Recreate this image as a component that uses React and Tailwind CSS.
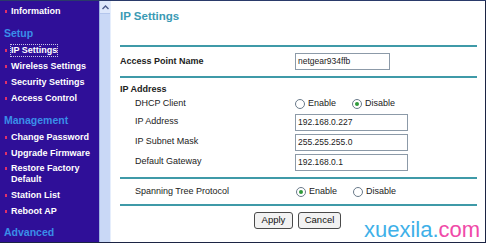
import React from "react";

const font = { fontFamily: '"Liberation Sans", Arial, sans-serif' };

function NavItem({ label, focused }) {
  return (
    <div className="flex items-center pl-[5px] h-[16px]">
      <span className="w-[2px] h-[3px] bg-[#e0306a] shrink-0" />
      <span
        className={`ml-[4px] text-[9px] leading-[11px] font-bold text-white ${
          focused ? "outline outline-1 outline-dotted outline-[#c8c8e8]" : ""
        }`}
      >
        {label}
      </span>
    </div>
  );
}

function NavHeading({ label }) {
  return (
    <div className="pl-[4px] h-[16px] flex items-center text-[10.5px] font-bold text-[#3a8ee8]">
      {label}
    </div>
  );
}

function Radio({ checked, label }) {
  return (
    <span className="flex items-center gap-[3px]">
      <span className="w-[10px] h-[10px] rounded-full border border-[#6a7a8a] bg-white flex items-center justify-center">
        {checked && <span className="w-[4px] h-[4px] rounded-full bg-[#2f9a3a]" />}
      </span>
      <span className="text-[9px] text-[#222]">{label}</span>
    </span>
  );
}

function TextBox({ value, w = "w-[113px]" }) {
  return (
    <div
      className={`${w} h-[17px] border border-[#8c9aa8] bg-white px-[2px] text-[8.5px] leading-[15px] text-[#222]`}
    >
      {value}
    </div>
  );
}

function FieldRow({ label, h = "h-[20px]", children }) {
  return (
    <div className={`flex items-center ${h}`}>
      <div className="pl-[15px] w-[175px] text-[9px] text-[#222]">{label}</div>
      {children}
    </div>
  );
}

const Line = () => <div className="h-[2px] bg-[#3f9aa8] mr-[8px]" />;

export default function App() {
  return (
    <div
      className="relative w-[486px] h-[246px] bg-white overflow-hidden border-t border-[#2a3a6a]"
      style={font}
    >
      <div className="flex h-[242px] border-b border-[#1c2444]">
        {/* Sidebar */}
        <div className="w-[99px] bg-[#2f0f98] pt-[2px] shrink-0">
          <NavItem label="Information" />
          <div className="h-[7px]" />
          <NavHeading label="Setup" />
          <NavItem label="IP Settings" focused />
          <NavItem label="Wireless Settings" />
          <NavItem label="Security Settings" />
          <NavItem label="Access Control" />
          <div className="h-[7px]" />
          <NavHeading label="Management" />
          <NavItem label="Change Password" />
          <NavItem label="Upgrade Firmware" />
          <div className="flex items-start pl-[5px] h-[26px] pt-[2px]">
            <span className="mt-[4px] w-[2px] h-[3px] bg-[#e0306a] shrink-0" />
            <span className="ml-[4px] text-[9px] leading-[11px] font-bold text-white">
              Restore Factory
              <br />
              Default
            </span>
          </div>
          <NavItem label="Station List" />
          <NavItem label="Reboot AP" />
          <div className="h-[6px]" />
          <NavHeading label="Advanced" />
        </div>

        {/* Scrollbar */}
        <div className="w-[12px] shrink-0 bg-[#c9d8f6] border-l border-[#9fb4e0] border-r border-r-[#e6eefc] flex flex-col">
          <div className="h-[13px] bg-[#dde7fb] border-b border-[#b4c6ec] flex items-center justify-center">
            <svg width="7" height="5" viewBox="0 0 7 5">
              <path d="M0.5 4 L3.5 1 L6.5 4" fill="none" stroke="#4a5a8a" strokeWidth="1.4" />
            </svg>
          </div>
        </div>

        {/* Content */}
        <div className="flex-1 pl-[9px] border-r border-[#1c2444]">
          <div className="h-[44px] pt-[7px] text-[11.5px] font-bold text-[#3a9ab4]">IP Settings</div>
          <Line />
          <div className="h-[29px] flex items-center">
            <div className="w-[175px] text-[9px] font-bold text-[#222]">Access Point Name</div>
            <TextBox value="netgear934ffb" w="w-[95px]" />
          </div>
          <Line />
          <div className="pt-[5px]">
            <div className="h-[13px] flex items-center text-[9px] font-bold text-[#222]">IP Address</div>
            <FieldRow label="DHCP Client" h="h-[16px]">
              <div className="flex gap-[16px]">
                <Radio label="Enable" />
                <Radio label="Disable" checked />
              </div>
            </FieldRow>
            <FieldRow label="IP Address">
              <TextBox value="192.168.0.227" />
            </FieldRow>
            <FieldRow label="IP Subnet Mask">
              <TextBox value="255.255.255.0" />
            </FieldRow>
            <FieldRow label="Default Gateway">
              <TextBox value="192.168.0.1" />
            </FieldRow>
          </div>
          <div className="h-[5px]" />
          <Line />
          <FieldRow label="Spanning Tree Protocol" h="h-[25px]">
            <div className="flex gap-[16px] pl-[1px]">
              <Radio label="Enable" checked />
              <Radio label="Disable" />
            </div>
          </FieldRow>
          <Line />
          <div className="flex gap-[5px] pt-[6px] pl-[134px]">
            <button className="w-[39px] h-[17px] rounded-[3px] border border-[#4a4a4a] bg-[#f2f2f2] text-[9.5px] text-[#111]">
              Apply
            </button>
            <button className="w-[43px] h-[17px] rounded-[3px] border border-[#4a4a4a] bg-[#f2f2f2] text-[9.5px] text-[#111]">
              Cancel
            </button>
          </div>
        </div>
      </div>

      {/* Watermark */}
      <div className="absolute left-[364px] top-[216px] text-[22px] leading-[26px]">
        <span className="text-[#3eb0e8]">xuexila.</span>
        <span className="text-[#f04aa8]">com</span>
      </div>
    </div>
  );
}
